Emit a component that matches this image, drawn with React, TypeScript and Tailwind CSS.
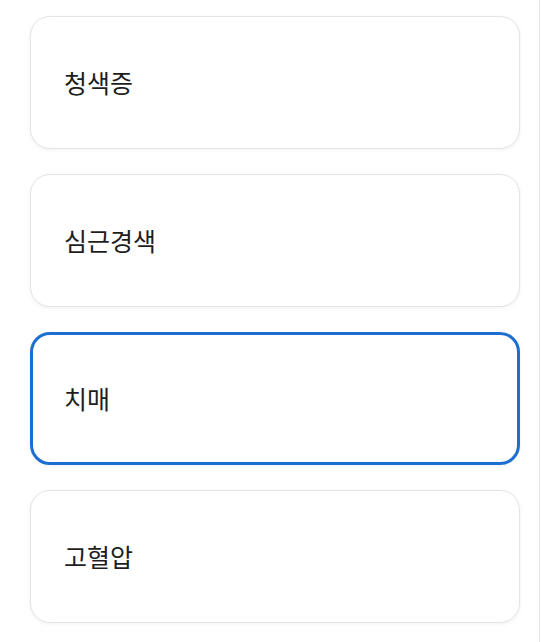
import React from "react";

const items = [
  { label: "청색증", selected: false },
  { label: "심근경색", selected: false },
  { label: "치매", selected: true },
  { label: "고혈압", selected: false },
];

export default function App() {
  return (
    <div
      className="w-[541px] h-[642px] bg-white overflow-hidden flex"
      style={{ fontFamily: '"Noto Sans CJK KR", "Noto Sans", sans-serif' }}
    >
      <div className="w-[540px] border-r border-[#e6e6e6] pt-[16px] pl-[30px] pr-[19px] flex flex-col gap-[25px]">
        {items.map((item) => (
          <div
            key={item.label}
            className={
              item.selected
                ? "h-[133px] rounded-[20px] border-[3px] border-[#1c6fd0] bg-white flex items-center pl-[31px] shadow-[0_1px_4px_rgba(0,0,0,0.06)]"
                : "h-[133px] rounded-[20px] border border-[#e4e4e4] bg-white flex items-center pl-[33px] shadow-[0_1px_4px_rgba(0,0,0,0.06)]"
            }
          >
            <p className="text-[25px] text-[#1e1e1e] leading-none">{item.label}</p>
          </div>
        ))}
      </div>
    </div>
  );
}
